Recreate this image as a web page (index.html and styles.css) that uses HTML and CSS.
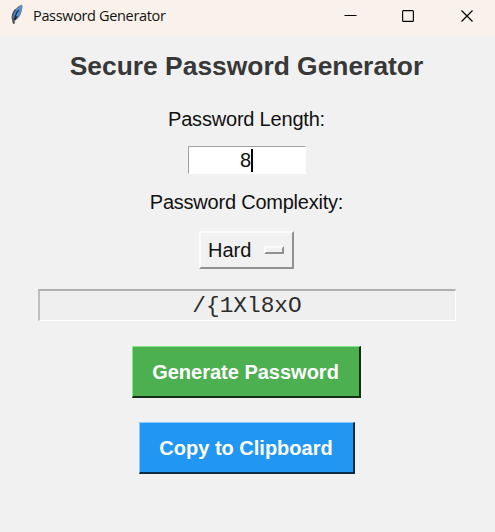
FILE: index.html
```html
<!DOCTYPE html>
<html lang="en">
<head>
<meta charset="utf-8">
<title>Password Generator</title>
<link rel="stylesheet" href="styles.css">
</head>
<body>
<header class="titlebar">
  <svg class="feather" width="14" height="21" viewBox="0 0 14 21">
    <path d="M11.800 1.200C8.500 1.800 4.200 6 2.700 10c-.8 2.600-.5 4.500.3 6l.3 3.300 1.100.1.300-3.200c3.600-1.500 5.800-5.500 6.500-9 .5-2.600 1.200-4.100.6-6z" fill="#4d8fdb" stroke="#857d74" stroke-width="1"/>
    <path d="M5.500 5.500C2.300 9.500 2 14 2.900 16l.900 3.500" fill="none" stroke="#4a4a4a" stroke-width="1.400"/>
    <path d="M8.500 6 6.300 9.500 4 16M7.300 12l-2.500 3.800" fill="none" stroke="#15263c" stroke-width="1.200"/>
  </svg>
  <span class="caption">Password Generator</span>
  <div class="controls">
    <svg width="58" height="35" viewBox="0 0 58 35"><path d="M23.500 15.500h12" stroke="#000" stroke-width="1"/></svg>
    <svg width="58" height="35" viewBox="0 0 58 35"><rect x="23.600" y="10.600" width="10.800" height="10.800" rx="1" fill="none" stroke="#000" stroke-width="1.200"/></svg>
    <svg width="58" height="35" viewBox="0 0 58 35"><path d="m24.500 10.500 11 11m0-11-11 11" stroke="#000" stroke-width="1.200"/></svg>
  </div>
</header>
<main class="window">
  <h1 class="heading">Secure Password Generator</h1>
  <div class="label">Password Length:</div>
  <div class="entry">8<span class="caret"></span></div>
  <div class="label complexity">Password Complexity:</div>
  <div class="option"><span>Hard</span><span class="indicator"></span></div>
  <div class="result">/{1Xl8xO</div>
  <button class="button generate">Generate Password</button>
  <button class="button copy">Copy to Clipboard</button>
</main>
</body>
</html>
```
FILE: styles.css
```css
* { box-sizing: border-box; }
body {
  margin: 0;
  height: 532px;
  overflow: hidden;
  background: #f1f1f1;
  color: #111;
  font-family: "Liberation Sans", Arial, sans-serif;
}
.titlebar {
  display: flex;
  height: 36px;
  background: #f9f1ea;
}
.feather { margin: 4px 0 0 10px; }
.caption {
  margin-left: 9px;
  font: 14.5px/32px "Open Sans", "Noto Sans", sans-serif;
  letter-spacing: -0.34px;
  white-space: nowrap;
}
.controls { display: flex; margin-left: auto; }
.window {
  display: flex;
  flex-direction: column;
  align-items: center;
  padding-right: 2px;
}
.heading {
  margin: 15px 0 0;
  font-size: 26.4px;
  line-height: 30px;
  color: #383838;
  white-space: nowrap;
}
.label {
  margin-top: 26px;
  font-size: 20px;
  line-height: 24px;
  letter-spacing: -0.2px;
}
.entry {
  display: flex;
  align-items: center;
  justify-content: center;
  width: 118px;
  height: 28px;
  margin-top: 15px;
  border: 1px solid #fff;
  border-top-color: #a0a0a0;
  border-left-color: #a0a0a0;
  background: #fff;
  font-size: 20px;
}
.caret { width: 2px; height: 23px; background: #000; }
.complexity { margin-top: 16px; letter-spacing: -0.22px; }
.option {
  display: flex;
  align-items: center;
  justify-content: space-between;
  width: 95px;
  height: 38px;
  margin-top: 17px;
  padding: 0 8px 0 7px;
  border: 2px solid #fbfbfb;
  border-right-color: #909090;
  border-bottom-color: #909090;
  font-size: 20px;
}
.indicator {
  width: 20px;
  height: 8px;
  border: 2px solid #fbfbfb;
  border-right-color: #909090;
  border-bottom-color: #909090;
}
.result {
  width: 418px;
  height: 32px;
  margin-top: 20px;
  border: 1px solid #fff;
  border-top: 2px solid #b0b0b0;
  border-left: 2px solid #bebebe;
  background: #efefef;
  font: 22.8px/30px "Liberation Mono", "Courier New", monospace;
  color: #2c2c2c;
  text-align: center;
}
.button {
  height: 52px;
  padding: 1px 0 0;
  border: 2px solid;
  border-width: 1px 2px 2px 1px;
  color: #fff;
  font: bold 20px "Liberation Sans", Arial, sans-serif;
}
.generate {
  width: 229px;
  margin-top: 25px;
  padding-right: 1px;
  background: #4caf50;
  border-color: #83e887 #142e15 #142e15 #83e887;
}
.copy {
  width: 216px;
  margin-top: 24px;
  background: #2196f3;
  border-color: #8acbff #0e2940 #0e2940 #8acbff;
}
```
